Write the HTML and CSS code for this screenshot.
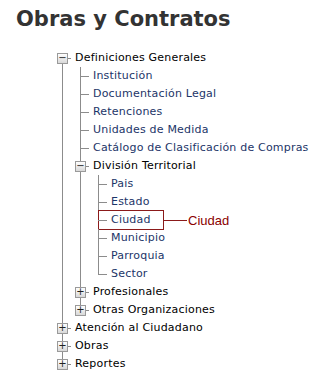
FILE: index.html
```html
<!DOCTYPE html>
<html lang="es">
  <head>
    <meta charset="utf-8">
    <title>Obras y Contratos</title>
    <link rel="stylesheet" href="styles.css">
  </head>
  <body>
    <h1 class="title">Obras y Contratos</h1>
    <ul class="tree root">
      <li class="node open">
        <span class="toggle">&minus;</span><span class="label">Definiciones Generales</span>
        <ul class="tree">
          <li class="leaf"><a href="#">Institución</a></li>
          <li class="leaf"><a href="#">Documentación Legal</a></li>
          <li class="leaf"><a href="#">Retenciones</a></li>
          <li class="leaf"><a href="#">Unidades de Medida</a></li>
          <li class="leaf"><a href="#">Catálogo de Clasificación de Compras</a></li>
          <li class="node open">
            <span class="toggle">&minus;</span><span class="label">División Territorial</span>
            <ul class="tree">
              <li class="leaf"><a href="#">Pais</a></li>
              <li class="leaf"><a href="#">Estado</a></li>
              <li class="leaf marked">
                <a href="#">Ciudad</a>
                <span class="callout"><span class="callout-text">Ciudad</span></span>
              </li>
              <li class="leaf"><a href="#">Municipio</a></li>
              <li class="leaf"><a href="#">Parroquia</a></li>
              <li class="leaf"><a href="#">Sector</a></li>
            </ul>
          </li>
          <li class="node"><span class="toggle">+</span><span class="label">Profesionales</span></li>
          <li class="node"><span class="toggle">+</span><span class="label">Otras Organizaciones</span></li>
        </ul>
      </li>
      <li class="node"><span class="toggle">+</span><span class="label">Atención al Ciudadano</span></li>
      <li class="node"><span class="toggle">+</span><span class="label">Obras</span></li>
      <li class="node"><span class="toggle">+</span><span class="label">Reportes</span></li>
    </ul>
  </body>
</html>
```

FILE: styles.css
```css
html { background: #fff; color: #000; font-family: "DejaVu Sans", Verdana, sans-serif; }
body { margin: 0; padding: 5px 0 0 16px; }
.title { margin: 0 0 16px; font-size: 21px; font-weight: bold; color: #333; line-height: 28px; }

.tree { list-style: none; margin: 0; padding: 0; font-size: 11px; line-height: 18px; }
.root { margin-left: 41px; }
.tree li { position: relative; padding-left: 18px; }

/* vertical line */
.tree li::before { content: ""; position: absolute; left: 5px; top: 0; bottom: 0; border-left: 1px solid #8c8c8c; }
.tree li:last-child::before { bottom: auto; height: 9px; }
.root > li:first-child::before { top: 9px; }
/* horizontal connector */
.tree li::after { content: ""; position: absolute; left: 5px; top: 9px; width: 9px; border-top: 1px solid #8c8c8c; }

.toggle { position: absolute; left: 0; top: 4px; z-index: 1; width: 9px; height: 9px; border: 1px solid #9a9a9a; background: linear-gradient(#fff, #d8d8d8); font-size: 10px; line-height: 8px; text-align: center; color: #222; box-sizing: content-box; }

.label { color: #000; letter-spacing: 0.2px; }
.leaf a { color: #1c3568; text-decoration: none; letter-spacing: 0.2px; }

.marked .callout { position: absolute; left: 5px; top: -1px; width: 64px; height: 18px; border: 1px solid #8b1a1a; }
.callout::after { content: ""; position: absolute; left: 64px; top: 9px; width: 24px; border-top: 1px solid #8b1a1a; }
.callout-text { position: absolute; left: 89px; top: 1px; font-family: "Liberation Sans", Arial, sans-serif; font-size: 13px; line-height: 18px; color: #8b0000; }
```
